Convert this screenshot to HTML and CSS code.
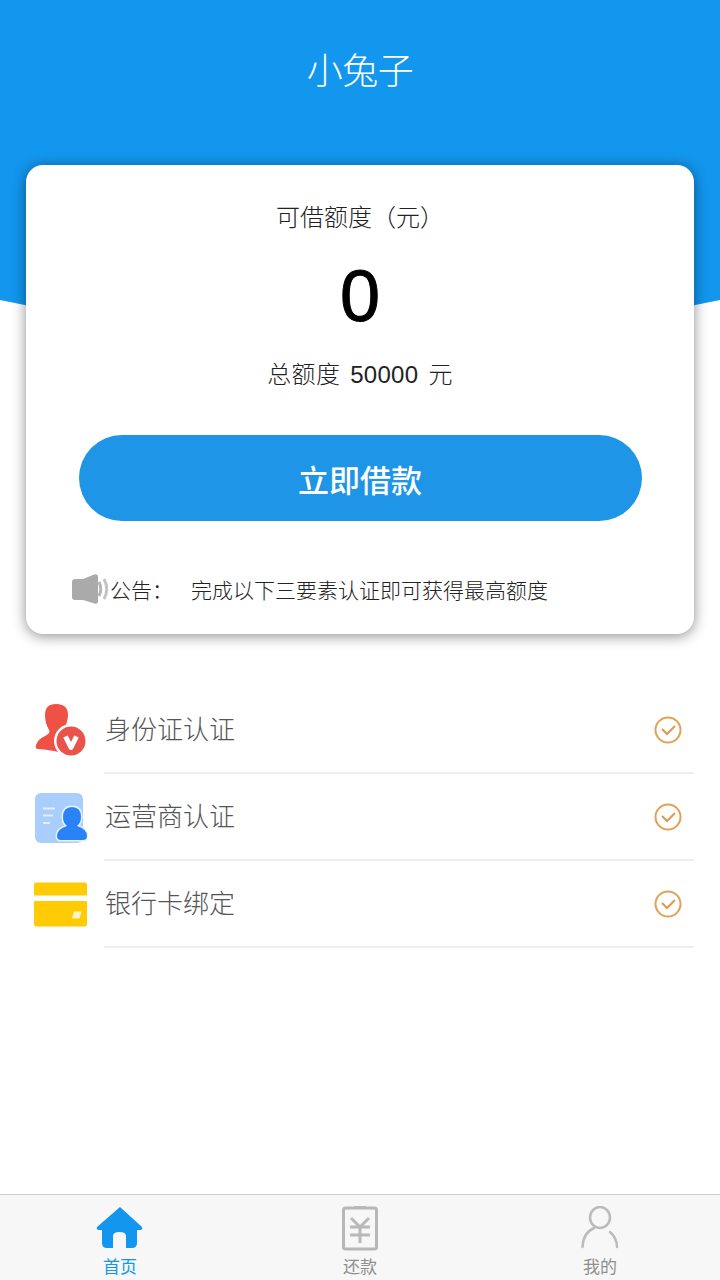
FILE: index.html
```html
<!DOCTYPE html>
<html lang="zh-CN">
<head>
    <meta charset="UTF-8">
    <meta name="viewport" content="width=device-width, initial-scale=1.0">
    <title>小兔子</title>
    <link rel="stylesheet" href="styles.css">
</head>
<body>
    <div class="page">
        <div class="hero">
            <h1 class="title">小兔子</h1>
        </div>
        <div class="card">
            <div class="quota-label">可借额度（元）</div>
            <div class="quota-value">0</div>
            <div class="quota-total">总额度 50000 元</div>
            <button class="loan-btn">立即借款</button>
            <div class="notice">
                <svg class="notice-icon" viewBox="0 0 39 34">
                    <path d="M4 7h8L22 3q5-2 5 2V29q0 4-5 2L12 28H4q-3 0-3-3V10q0-3 3-3z" fill="#aaaaaa"/>
                    <path d="M28 10q3.500 7 0 14" fill="none" stroke="#b5b5b5" stroke-width="3"/>
                    <path d="M33 7q5.500 10 0 20" fill="none" stroke="#c4c4c4" stroke-width="3"/>
                </svg>
                <span class="notice-label">公告：</span>
                <span class="notice-text">完成以下三要素认证即可获得最高额度</span>
            </div>
        </div>
        <div class="list">
            <div class="row">
                <svg class="row-icon" viewBox="0 0 54 54">
                    <path d="M22 0Q34 0 34 11 34 18 30 24L32 28 38 37 25 48Q10 45 4 45 1 45 2 41 4 35 11 32 17 29 15 26 11 19 11 11 11 0 22 0z" fill="#ef5145"/>
                    <circle cx="37" cy="37" r="17" fill="#fff"/>
                    <circle cx="37" cy="37" r="14.500" fill="#e9534a"/>
                    <path d="M31.500 32.500L37 43.500 42.500 32.500" fill="none" stroke="#fff" stroke-width="5" stroke-linejoin="round"/>
                </svg>
                <div class="row-body">
                    <span class="row-text">身份证认证</span>
                    <svg class="check" viewBox="0 0 28 28">
                        <circle cx="14" cy="14" r="12.500" fill="none" stroke="#e2a054" stroke-width="2"/>
                        <path d="M8 13l5 5 8-8" fill="none" stroke="#dd9a50" stroke-width="2"/>
                    </svg>
                </div>
            </div>
            <div class="row">
                <svg class="row-icon" viewBox="0 0 54 54">
                    <rect x="1" y="2" width="48" height="50" rx="6" fill="#a9cdfd"/>
                    <path d="M9 17.500h12M9 24.500h10M9 32h7" stroke="#e3effe" stroke-width="2"/>
                    <path d="M38 16Q47 16 47 26 47 32 43 35 53 38 53 45 53 49 49 49H27Q23 49 23 45 23 38 33 35 29 32 29 26 29 16 38 16z" fill="#2a83f6" stroke="#e8f2ff" stroke-width="3" paint-order="stroke"/>
                </svg>
                <div class="row-body">
                    <span class="row-text">运营商认证</span>
                    <svg class="check" viewBox="0 0 28 28">
                        <circle cx="14" cy="14" r="12.500" fill="none" stroke="#e2a054" stroke-width="2"/>
                        <path d="M8 13l5 5 8-8" fill="none" stroke="#dd9a50" stroke-width="2"/>
                    </svg>
                </div>
            </div>
            <div class="row">
                <svg class="row-icon" viewBox="0 0 54 54">
                    <path d="M0 7q0-2.500 2.500-2.500h48q2.500 0 2.500 2.500v10.500H0z" fill="#ffcb05"/>
                    <path d="M0 23h53v23q0 2.500-2.500 2.500H2.500Q0 48.500 0 46z" fill="#ffcb05"/>
                    <path d="M40 33.500h7.500l-2 7H38z" fill="#fff3c4"/>
                </svg>
                <div class="row-body">
                    <span class="row-text">银行卡绑定</span>
                    <svg class="check" viewBox="0 0 28 28">
                        <circle cx="14" cy="14" r="12.500" fill="none" stroke="#e2a054" stroke-width="2"/>
                        <path d="M8 13l5 5 8-8" fill="none" stroke="#dd9a50" stroke-width="2"/>
                    </svg>
                </div>
            </div>
        </div>
    </div>
    <div class="tabbar">
        <div class="tab tab-active">
            <svg class="tab-icon" viewBox="0 0 48 46">
                <path d="M24 1L1 21q-1 3 2 3h3v13q0 5 5 5h6V30q0-4 6.500-4t6.500 4V42h6q5 0 5-5V24h3q3 0 2-3z" fill="#1296ee"/>
            </svg>
            <span>首页</span>
        </div>
        <div class="tab">
            <svg class="tab-icon" viewBox="0 0 48 46">
                <rect x="7.500" y="2" width="33" height="41" rx="2" fill="none" stroke="#b8b8b8" stroke-width="3"/>
                <path d="M18 0h12v3H18z" fill="#b8b8b8"/>
                <path d="M15 12l9 9 9-9M14 21h20M14 29h20M24 21v16" fill="none" stroke="#b8b8b8" stroke-width="3"/>
            </svg>
            <span>还款</span>
        </div>
        <div class="tab">
            <svg class="tab-icon" viewBox="0 0 48 46">
                <ellipse cx="24" cy="11.500" rx="10" ry="10.500" fill="none" stroke="#bbbbbb" stroke-width="2.500"/>
                <path d="M18 22Q7 27 6.500 41M34 26Q41 32 41 41" fill="none" stroke="#bbbbbb" stroke-width="2.500" stroke-linecap="round"/>
            </svg>
            <span>我的</span>
        </div>
    </div>
</body>
</html>
```

FILE: styles.css
```css
* {
    box-sizing: border-box;
}
body {
    font-family: "Liberation Sans", "Noto Sans CJK SC", sans-serif;
    margin: 0;
    background-color: #ffffff;
    color: #333333;
}
.page {
    height: 1194px;
    overflow: hidden;
}
.hero {
    height: 336px;
    background-color: #1296ee;
    clip-path: ellipse(800px 336px at 50% 0);
    padding-top: 47px;
}
.title {
    margin: 0;
    text-align: center;
    color: #ffffff;
    font-size: 36px;
    font-weight: 300;
    line-height: 50px;
    letter-spacing: -0.5px;
}
.card {
    position: relative;
    height: 469px;
    margin: -171px 26px 0;
    padding-top: 35px;
    background: #ffffff;
    border-radius: 17px;
    box-shadow: 0 2px 14px rgba(0, 0, 0, 0.45);
    text-align: center;
}
.quota-label {
    font-size: 24px;
    line-height: 36px;
    color: #222222;
    font-weight: 300;
}
.quota-value {
    margin-top: 20px;
    font-size: 72px;
    line-height: 80px;
    color: #000000;
    -webkit-text-stroke: 1px #000000;
}
.quota-total {
    margin-top: 21px;
    font-size: 24px;
    line-height: 36px;
    font-weight: 300;
    color: #222222;
    word-spacing: 3px;
    letter-spacing: 0.3px;
}
.loan-btn {
    display: block;
    width: 563px;
    height: 86px;
    margin: 42px auto 0;
    border: none;
    border-radius: 43px;
    background-color: #1e95e6;
    color: #ffffff;
    font-family: inherit;
    font-size: 31px;
    font-weight: 500;
}
.notice {
    display: flex;
    align-items: center;
    margin-top: 51px;
    padding-left: 45px;
    font-size: 21px;
    font-weight: 300;
    color: #222222;
}
.notice-icon {
    width: 39px;
    height: 34px;
    flex: none;
}
.notice-label {
    width: 81px;
    text-align: left;
}
.list {
    margin-top: 53px;
    padding-left: 34px;
}
.row {
    display: flex;
    align-items: center;
    height: 87px;
}
.row-icon {
    width: 54px;
    height: 54px;
    flex: none;
}
.row-body {
    display: flex;
    align-items: center;
    justify-content: space-between;
    height: 87px;
    width: 590px;
    margin-left: 16px;
    padding-right: 12px;
    border-bottom: 2px solid #eeeeee;
}
.row-text {
    margin: -4px 0 0 1px;
    font-size: 26px;
    font-weight: 300;
    color: #555555;
}
.check {
    width: 28px;
    height: 28px;
}
.tabbar {
    display: flex;
    height: 86px;
    background-color: #f7f7f7;
    border-top: 1px solid #cccccc;
}
.tab {
    flex: 1;
    display: flex;
    flex-direction: column;
    align-items: center;
    padding-top: 11px;
    font-size: 17px;
    line-height: 24px;
    color: #8f8f8f;
}
.tab-active {
    color: #1296ee;
}
.tab-icon {
    width: 48px;
    height: 46px;
    margin-bottom: 4px;
}
```
